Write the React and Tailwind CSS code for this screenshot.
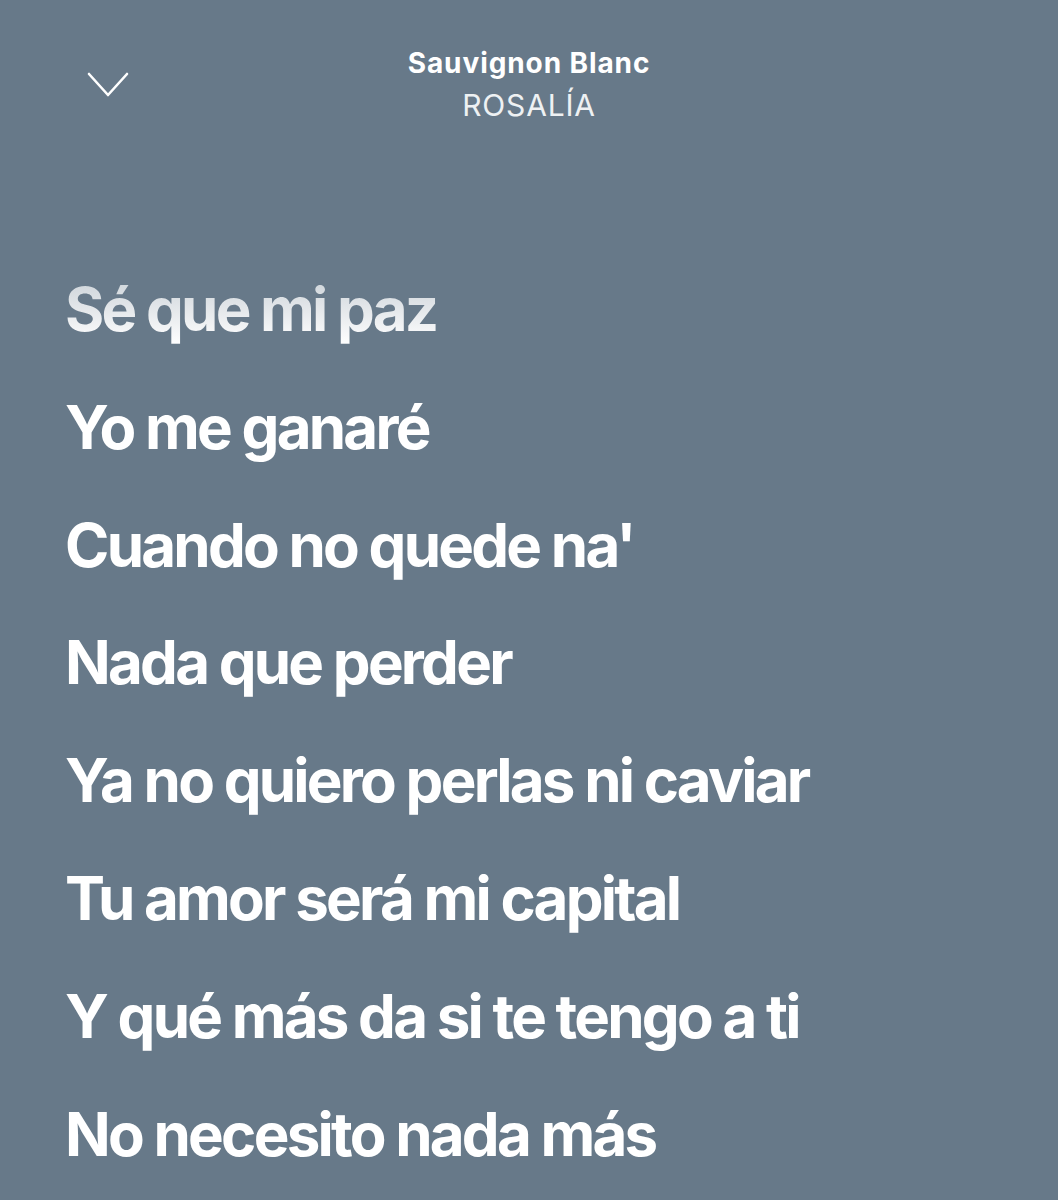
export default function App() {
  const lines = [
    "Yo me ganaré",
    "Cuando no quede na'",
    "Nada que perder",
    "Ya no quiero perlas ni caviar",
    "Tu amor será mi capital",
    "Y qué más da si te tengo a ti",
    "No necesito nada más",
  ];
  return (
    <div className="w-[1058px] h-[1200px] overflow-hidden bg-[#677989] text-white" style={{ fontFamily: "Inter, 'Noto Sans', sans-serif" }}>
      <div className="relative h-[200px]">
        <svg className="absolute left-[86px] top-[70px]" width="44" height="30" viewBox="0 0 44 30" fill="none">
          <path d="M3 4 L22 25 L41 4" stroke="white" strokeWidth="2.6" strokeLinecap="round" strokeLinejoin="round" />
        </svg>
        <div className="flex flex-col items-center pt-[44px]">
          <div className="text-[28px] font-bold leading-[38px] tracking-[0.9px]">Sauvignon Blanc</div>
          <div className="text-[30px] font-normal leading-[46px] tracking-[0.8px] text-[#eef1f3]">ROSALÍA</div>
        </div>
      </div>
      <div className="pl-[65px] pt-[51px] flex flex-col">
        <div className="text-[60px] font-bold leading-[117.8px] tracking-[-2.75px]">
          <span className="bg-gradient-to-b from-[#c9d0d6] to-white bg-clip-text text-transparent">Sé que mi paz</span>
        </div>
        {lines.map((l) => (
          <div key={l} className="text-[60px] font-bold leading-[117.8px] tracking-[-2.75px]">{l}</div>
        ))}
      </div>
    </div>
  );
}
